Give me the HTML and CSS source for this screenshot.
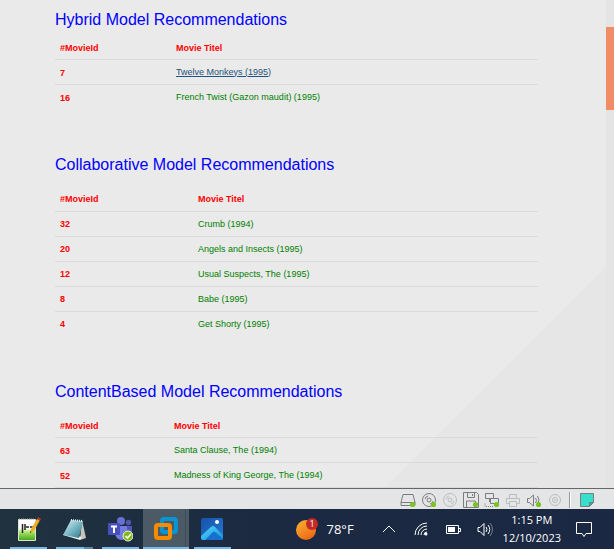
FILE: index.html
```html
<!DOCTYPE html>
<html lang="en">
<head>
<meta charset="utf-8">
<title>Movie Recommendations</title>
<link rel="stylesheet" href="styles.css">
</head>
<body>
<div class="viewport">
  <main class="content">
    <section class="model">
      <h2>Hybrid Model Recommendations</h2>
      <table class="movies movies-hybrid">
        <thead><tr><th scope="col">#MovieId</th><th scope="col">Movie Titel</th></tr></thead>
        <tbody>
          <tr><th scope="row">7</th><td><a href="#">Twelve Monkeys (1995)</a></td></tr>
          <tr><th scope="row">16</th><td>French Twist (Gazon maudit) (1995)</td></tr>
        </tbody>
      </table>
    </section>
    <section class="model">
      <h2>Collaborative Model Recommendations</h2>
      <table class="movies movies-collab">
        <thead><tr><th scope="col">#MovieId</th><th scope="col">Movie Titel</th></tr></thead>
        <tbody>
          <tr><th scope="row">32</th><td>Crumb (1994)</td></tr>
          <tr><th scope="row">20</th><td>Angels and Insects (1995)</td></tr>
          <tr><th scope="row">12</th><td>Usual Suspects, The (1995)</td></tr>
          <tr><th scope="row">8</th><td>Babe (1995)</td></tr>
          <tr><th scope="row">4</th><td>Get Shorty (1995)</td></tr>
        </tbody>
      </table>
    </section>
    <section class="model">
      <h2>ContentBased Model Recommendations</h2>
      <table class="movies movies-content">
        <thead><tr><th scope="col">#MovieId</th><th scope="col">Movie Titel</th></tr></thead>
        <tbody>
          <tr><th scope="row">63</th><td>Santa Clause, The (1994)</td></tr>
          <tr><th scope="row">52</th><td>Madness of King George, The (1994)</td></tr>
        </tbody>
      </table>
    </section>
  </main>
  <div class="scroll-track"><div class="scroll-thumb"></div></div>
</div>

<div class="device-bar">
  <svg class="device" viewBox="0 0 16 16"><path d="M3 2.500h10l2 8v3H1v-3zM1 10.500h14" /><circle class="on" cx="12.500" cy="12.500" r="2.600"/></svg>
  <svg class="device" viewBox="0 0 16 16"><circle cx="8" cy="8" r="6.500"/><circle cx="8" cy="8" r="2"/><path d="M4 7a4 4 0 0 1 3-3M12 9a4 4 0 0 1-3 3"/><circle class="on" cx="12.500" cy="12.500" r="2.600"/></svg>
  <svg class="device off" viewBox="0 0 16 16"><circle cx="8" cy="8" r="6.500"/><circle cx="8" cy="8" r="2"/><path d="M4 7a4 4 0 0 1 3-3M12 9a4 4 0 0 1-3 3"/></svg>
  <svg class="device" viewBox="0 0 16 16"><path d="M.5.5h13l2 2v13H.5zM4.500.5v5h7v-5M9.500 2v2M3.500 15v-6h9v6"/><circle class="on" cx="12.500" cy="12.500" r="2.600"/></svg>
  <svg class="device" viewBox="0 0 16 16"><path d="M1.500 1.500h8v5h-8zM6.500 6.500h8v5h-8zM5.500 7v3"/><path stroke-dasharray="1 1" d="M1 11.500v3h9"/><circle class="on" cx="12.500" cy="12.500" r="2.600"/></svg>
  <svg class="device off" viewBox="0 0 16 16"><path d="M4.500 6V2.500h7V6M4 11.500H1.500v-5h13v5H12M4.500 9.500h7v5h-7z"/></svg>
  <svg class="device" viewBox="0 0 16 16"><path d="M1.500 6.500h2l4-3.500v11l-4-3.500h-2zM9.500 6q2 2.500 0 5M11.500 4q3 4 0 8"/><circle class="on" cx="12.500" cy="12.500" r="2.600"/></svg>
  <svg class="device off" viewBox="0 0 16 16"><circle cx="8" cy="8" r="5.500"/><circle cx="8" cy="8" r="2.500"/><path d="M8 7v2"/></svg>
  <span class="divider"></span>
  <svg class="device" viewBox="0 0 16 16"><path fill="#36e0cc" d="M1.500 1.500h13v9l-4 4h-9z"/><path fill="#23b5a5" d="M10.500 14.500v-4h4z"/></svg>
</div>

<footer class="taskbar">
  <nav class="apps">
    <button class="app" aria-label="Notepad++">
      <svg viewBox="0 0 26 26"><defs><linearGradient id="np" x2="0" y2="1"><stop offset=".4" stop-color="#fff"/><stop offset=".65" stop-color="#9ddb57"/><stop offset="1" stop-color="#44a51d"/></linearGradient></defs><path fill="url(#np)" stroke="#d9e5cf" d="M3.500 3.500h17v21h-17z"/><path stroke="#a7a7a7" stroke-dasharray="1 1" d="M4 3h16"/><path fill="none" stroke="#222" stroke-width="1.500" d="M7.500 8v9M10 8v6M11 11h3M15 11h3"/><path d="m15 17 1-4 6-10 3 1-6 11z" fill="#edae27"/><path d="m22 3 1-2 3 2-1 2z" fill="#b33b2b"/><path d="m15 17 .5-2 1 1z" fill="#222"/></svg>
    </button>
    <button class="app app-stacked" aria-label="Notepad">
      <svg viewBox="0 0 26 26"><defs><linearGradient id="nt" x2="1" y2="1"><stop stop-color="#dff5f6"/><stop offset=".6" stop-color="#68acbb"/><stop offset="1" stop-color="#317286"/></linearGradient></defs><path fill="#c4c5bb" d="m21 4 4 18-6 2z"/><path fill="#f1f3ed" d="m2 19 17 5 2-3L4 17z"/><path fill="url(#nt)" d="M10 4l12 1-4 17L2 19z"/><path stroke="#e5eeee" stroke-dasharray="1 1" stroke-width="2" d="m10 4 12 1"/></svg>
    </button>
    <button class="app" aria-label="Teams">
      <svg viewBox="0 0 26 26"><circle cx="14" cy="5" r="4" fill="#6870d2"/><circle cx="21.500" cy="6.500" r="2.700" fill="#4e57b5"/><path fill="#4e57b5" d="M18 10h7v7q-1 4-5 4z"/><path fill="#737bdf" d="M9 10h11v8q-1 6-6 6-5-1-6-6z"/><rect x="1" y="7" width="12" height="12" rx="1" fill="#4850ba"/><path stroke="#fff" stroke-width="2" d="M4 10.500h6M7 10v7"/><circle cx="21" cy="20" r="5" fill="#84b91c" stroke="#eef4df"/><path fill="none" stroke="#fff" stroke-width="1.500" d="m18.500 20 2 2 3.500-4"/></svg>
    </button>
    <button class="app app-active" aria-label="VMware Workstation">
      <svg viewBox="0 0 26 26"><rect x="9" y="3" width="14" height="13" rx="2" fill="none" stroke="#0795d3" stroke-width="4"/><rect x="3" y="9" width="14" height="13" rx="2" fill="none" stroke="#f48b00" stroke-width="4"/></svg>
    </button>
    <button class="app" aria-label="Photos">
      <svg viewBox="0 0 26 26"><defs><linearGradient id="ph" x2="1" y2="1"><stop stop-color="#1653aa"/><stop offset="1" stop-color="#2478d5"/></linearGradient><linearGradient id="mt" x2="1" y2="1"><stop stop-color="#54dcf7"/><stop offset="1" stop-color="#148ade"/></linearGradient></defs><rect x="2" y="2" width="22" height="22" rx="2" fill="url(#ph)"/><path fill="url(#mt)" d="M2 20 12 11q2-2 4 0l8 8v3q0 2-2 2H4q-2 0-2-2z"/><path fill="#1870ce" d="m6 24 8-8q1-1 2 0l8 7-2 1z"/><circle cx="18" cy="6" r="2" fill="#fff"/></svg>
    </button>
  </nav>
  <div class="tray">
    <button class="weather">
      <svg viewBox="0 0 24 24"><defs><linearGradient id="sun" x2=".6" y2="1"><stop stop-color="#f8b632"/><stop offset="1" stop-color="#ee6817"/></linearGradient></defs><circle cx="11" cy="13" r="10" fill="url(#sun)"/><circle cx="17" cy="7" r="6" fill="#c42b26"/><text x="17" y="10" text-anchor="middle" class="badge-text">1</text></svg>
      <span>78°F</span>
    </button>
    <div class="indicators">
      <svg viewBox="0 0 16 16"><path d="m2 11 6-6 6 6"/></svg>
      <svg viewBox="0 0 16 16"><path d="M2 14A12 12 0 0 1 14 2M5 14A9 9 0 0 1 14 5M8 14A6 6 0 0 1 14 8M11 14A3 3 0 0 1 14 11"/><circle class="solid" cx="13" cy="13" r="1.500"/></svg>
      <svg viewBox="0 0 16 16"><path d="M1.500 4.500h12v8h-12zM14 7.500h1.500v3H14"/><path class="solid" d="M3 6h7v5H3z"/></svg>
      <svg viewBox="0 0 16 16"><path d="M1 6.500h2l4-4v12l-4-4H1zM9 6q2 2.500 0 5M11 4q3.500 4.500 0 9"/><path opacity=".4" d="M13 2q5 6.500 0 13"/></svg>
    </div>
    <time class="clock" datetime="2023-12-10T13:15"><span>1:15 PM</span><span>12/10/2023</span></time>
    <button class="notifications" aria-label="Notifications"><svg viewBox="0 0 18 18"><path d="M1.500 2.500h15v11H11l-2 3-2-3H1.500z"/></svg></button>
  </div>
</footer>
</body>
</html>
```
FILE: styles.css
```css
* { box-sizing: border-box; }

body {
  margin: 0;
  height: 100vh;
  display: flex;
  flex-direction: column;
  overflow: hidden;
  font-family: "Liberation Sans", Arial, sans-serif;
}

button {
  border: 0;
  padding: 0;
  background: none;
  color: inherit;
  font: inherit;
}

.viewport {
  flex: 1;
  min-height: 0;
  display: flex;
  overflow: hidden;
}

.content {
  flex: 1;
  padding: 10px 68px 0 55px;
  background: linear-gradient(315deg, #e6e6e6 156px, #eaeaea 157px);
}

.model { margin-bottom: 45px; }

h2 {
  margin: 0;
  font-size: 16px;
  line-height: 20px;
  font-weight: 400;
  color: #0000ff;
}

.movies {
  width: 100%;
  table-layout: fixed;
  border-collapse: separate;
  border-spacing: 0;
  font-size: 9px;
  line-height: 12px;
  color: #008000;
}

.movies th,
.movies td {
  height: 25px;
  padding: 0 5px 1px;
  text-align: left;
  vertical-align: middle;
  border-bottom: 1px solid #dadada;
}

.movies th { color: #ff0000; }

.movies-hybrid th,
.movies-content th { padding: 1px 5px 0; }

.movies-hybrid { margin-top: 5px; }
.movies-collab { margin-top: 12px; }
.movies-content { margin-top: 11px; }

.movies-hybrid tbody tr:last-child > *,
.movies-collab tbody tr:last-child > * { border-bottom-color: transparent; }

.movies-hybrid th:first-child { width: 116px; }
.movies-collab th:first-child { width: 138px; }
.movies-content th:first-child { width: 114px; }
.movies a { color: #23527c; }

.scroll-track {
  width: 8px;
  padding-top: 27px;
  background: #e4e4e4;
}

.scroll-thumb {
  height: 83px;
  background: #f08c66;
}

.device-bar {
  height: 21px;
  display: flex;
  justify-content: flex-end;
  align-items: center;
  gap: 5px;
  padding: 2px 19px 0 0;
  border-top: 1px solid #666;
  background: #e4e5e7;
}

.device {
  width: 16px;
  height: 16px;
  fill: none;
  stroke: #7c7c7c;
}

.device.off { stroke: #bcbcbc; }
.device .on { fill: #7ac51c; stroke: none; }

.divider {
  width: 2px;
  height: 16px;
  margin: 0 3px 0 1px;
  background: #999;
  border-right: 1px solid #fff;
}

.taskbar {
  height: 40px;
  display: flex;
  justify-content: space-between;
  color: #fff;
  font-family: "Open Sans", "Noto Sans", sans-serif;
  font-size: 11px;
  background: linear-gradient(90deg, #20323f, #1b2942 50%, #1a2843);
}

.apps {
  display: flex;
  padding-left: 5px;
}

.app {
  position: relative;
  width: 46px;
  display: grid;
  place-items: center;
}

.app svg { width: 26px; height: 26px; }

.app::after {
  content: "";
  position: absolute;
  inset: auto 4px 0 5px;
  height: 2px;
  background: #76b9ed;
}

.app-stacked::after { background: linear-gradient(90deg, #76b9ed 28px, #5688ab 28px); }
.app-active { background: linear-gradient(90deg, #4c5a66 42px, #34434f 42px, #4c5a66 43px); }
.app-active::after { inset: auto 0 0; }

.tray {
  display: flex;
  align-items: center;
  padding-right: 21px;
}

.weather {
  display: flex;
  align-items: center;
  gap: 7px;
  margin-right: 27px;
  font-size: 13px;
}

.weather svg { width: 24px; height: 24px; }
.badge-text { fill: #fff; font-size: 9px; }

.indicators {
  display: flex;
  gap: 16px;
}

.indicators svg { width: 16px; height: 16px; }
.indicators path, .indicators circle, .notifications path { fill: none; stroke: #fff; }
.indicators .solid { fill: #fff; stroke: none; }

.clock {
  display: flex;
  flex-direction: column;
  align-items: center;
  margin: 0 14px 0 10px;
  line-height: 18px;
}

.notifications svg {
  display: block;
  width: 18px;
  height: 18px;
}
```
